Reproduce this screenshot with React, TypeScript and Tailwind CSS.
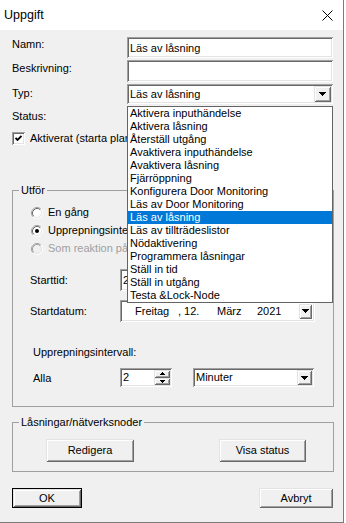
import React from 'react';

const sunken =
  'bg-white shadow-[inset_1px_1px_#a0a0a0,inset_-1px_-1px_#ffffff,inset_2px_2px_#696969,inset_-2px_-2px_#e3e3e3]';
const raised =
  'bg-[#f0f0f0] shadow-[inset_1px_1px_#e3e3e3,inset_-1px_-1px_#696969,inset_2px_2px_#ffffff,inset_-2px_-2px_#a0a0a0]';

const typeOptions = [
  'Aktivera inputhändelse',
  'Aktivera låsning',
  'Återställ utgång',
  'Avaktivera inputhändelse',
  'Avaktivera låsning',
  'Fjärröppning',
  'Konfigurera Door Monitoring',
  'Läs av Door Monitoring',
  'Läs av låsning',
  'Läs av tillträdeslistor',
  'Nödaktivering',
  'Programmera låsningar',
  'Ställ in tid',
  'Ställ in utgång',
  'Testa &Lock-Node',
];

const Arrow = () => (
  <svg width="7" height="4" viewBox="0 0 7 4" className="block">
    <path d="M0 0h7v1H0zM1 1h5v1H1zM2 2h3v1H2zM3 3h1v1H3z" fill="#000" />
  </svg>
);

const SmallArrow = ({ up }: { up?: boolean }) => (
  <svg width="5" height="3" viewBox="0 0 5 3" className="block">
    {up ? (
      <path d="M2 0h1v1H2zM1 1h3v1H1zM0 2h5v1H0z" fill="#000" />
    ) : (
      <path d="M0 0h5v1H0zM1 1h3v1H1zM2 2h1v1H2z" fill="#000" />
    )}
  </svg>
);

const DropButton = ({ className }: { className: string }) => (
  <div className={`${raised} ${className} flex items-center justify-center`}>
    <Arrow />
  </div>
);

const Radio = ({ checked, disabled }: { checked?: boolean; disabled?: boolean }) => (
  <svg width="12" height="12" viewBox="0 0 12 12" className="block shrink-0">
    <circle cx="6" cy="6" r="5" fill={disabled ? '#f0f0f0' : '#ffffff'} />
    <path d="M2.11 9.89A5.5 5.5 0 0 1 9.89 2.11" fill="none" stroke="#a0a0a0" />
    <path d="M9.89 2.11A5.5 5.5 0 0 1 2.11 9.89" fill="none" stroke="#ffffff" />
    <path d="M2.82 9.18A4.5 4.5 0 0 1 9.18 2.82" fill="none" stroke={disabled ? '#a0a0a0' : '#696969'} />
    <path d="M9.18 2.82A4.5 4.5 0 0 1 2.82 9.18" fill="none" stroke="#e3e3e3" />
    {checked && <circle cx="6" cy="6" r="2" fill="#000" />}
  </svg>
);

const Button = ({ label, className, isDefault }: { label: string; className: string; isDefault?: boolean }) => (
  <div className={`${className} ${isDefault ? 'border border-black' : ''}`}>
    <div className={`${raised} w-full h-full flex items-center justify-center`}>{label}</div>
  </div>
);

export default function App() {
  return (
    <div className="w-[346px] h-[523px] bg-white font-['Liberation_Sans',Arial,sans-serif] text-[11px] leading-[13px] text-black">
      <div className="relative w-[344px] h-[523px] bg-[#f0f0f0] border-r border-b border-[#7a7a7a] flex flex-col">
        {/* Title bar */}
        <div className="h-[30px] bg-white flex items-center justify-between pl-[4px] pr-[10px] shrink-0">
          <span className="text-[12.5px]">Uppgift</span>
          <svg width="11" height="11" viewBox="0 0 11 11" className="block">
            <path d="M0.5 0.5L10.5 10.5M10.5 0.5L0.5 10.5" stroke="#000" strokeWidth="1" />
          </svg>
        </div>

        <div className="flex flex-col pl-[12px] pr-[10px] pt-[7px]">
          {/* Name / description / type */}
          <div className="flex h-[21px]">
            <div className="w-[115px] pt-[1px]">Namn:</div>
            <div className={`${sunken} w-[206px] flex items-center pl-[3px] pt-[1px]`}>Läs av låsning</div>
          </div>
          <div className="flex h-[22px] mt-[2px]">
            <div className="w-[115px] pt-[2px]">Beskrivning:</div>
            <div className={`${sunken} w-[206px]`} />
          </div>
          <div className="flex h-[20px] mt-[2px]">
            <div className="w-[115px] pt-[3px]">Typ:</div>
            <div className={`${sunken} w-[206px] flex items-stretch`}>
              <div className="flex-1 flex items-center pl-[3px]">Läs av låsning</div>
              <DropButton className="w-[17px] m-[2px]" />
            </div>
          </div>

          <div className="mt-[6px]">Status:</div>

          <div className="flex items-center h-[13px] mt-[9px] gap-[5px] whitespace-nowrap">
            <div className={`${sunken} w-[13px] h-[13px] flex items-center justify-center shrink-0`}>
              <svg width="7" height="7" viewBox="0 0 7 7" className="block">
                <polyline points="0.5,3 2.5,5 6.5,1" fill="none" stroke="#000" strokeWidth="1.8" />
              </svg>
            </div>
            {/* the rest of this label is hidden behind the open list */}
            <span className="w-[97px] overflow-hidden">Aktiverat (starta planerade uppgifter)</span>
          </div>

          {/* Utför */}
          <fieldset className="mt-[39px] w-[322px] border border-[#a0a0a0] p-0 pb-[19px]">
            <legend className="ml-[6px] px-[2px] leading-[13px]">Utför</legend>
            <div className="ml-[18px] mt-[9px] flex flex-col gap-[5px]">
              <div className="flex items-center h-[13px] gap-[5px] whitespace-nowrap">
                <Radio />
                <span>En gång</span>
              </div>
              <div className="flex items-center h-[13px] gap-[5px] whitespace-nowrap">
                <Radio checked />
                <span className="w-[79px] overflow-hidden">Upprepningsintervall</span>
              </div>
              <div className="flex items-center h-[13px] gap-[5px] whitespace-nowrap text-[#a0a0a0]">
                <Radio disabled />
                <span className="w-[79px] overflow-hidden">Som reaktion på händelse</span>
              </div>
            </div>

            <div className="ml-[17px] mt-[14px] flex items-center h-[22px]">
              <div className="w-[90px]">Starttid:</div>
              <div className={`${sunken} w-[100px] h-full flex items-center pl-[3px]`}>
                <span className="w-[4px] overflow-hidden whitespace-nowrap">20:00</span>
              </div>
            </div>
            <div className="ml-[17px] mt-[9px] flex items-center h-[22px]">
              <div className="w-[90px] pt-[1px]">Startdatum:</div>
              <div className={`${sunken} w-[195px] h-full flex items-center pl-[15px] whitespace-nowrap`}>
                <span className="w-[43px]">Freitag</span>
                <span className="w-[39px]">, 12.</span>
                <span className="w-[40px]">März</span>
                <span className="flex-1">2021</span>
                <DropButton className="w-[13px] h-[15px] mr-[3px]" />
              </div>
            </div>

            <div className="ml-[20px] mt-[24px]">Upprepningsintervall:</div>
            <div className="ml-[20px] mt-[9px] flex h-[19px]">
              <div className="w-[87px] pt-[4px]">Alla</div>
              <div className={`${sunken} w-[52px] flex items-stretch`}>
                <div className="flex-1 flex items-center pl-[3px]">2</div>
                <div className="w-[16px] m-[2px] flex flex-col">
                  <div className={`${raised} flex-1 flex items-center justify-center`}>
                    <SmallArrow up />
                  </div>
                  <div className={`${raised} flex-1 flex items-center justify-center`}>
                    <SmallArrow />
                  </div>
                </div>
              </div>
              <div className={`${sunken} ml-[21px] w-[121px] flex items-stretch`}>
                <div className="flex-1 flex items-center pl-[3px]">Minuter</div>
                <DropButton className="w-[15px] m-[2px]" />
              </div>
            </div>
          </fieldset>

          {/* Låsningar/nätverksnoder */}
          <fieldset className="mt-[9px] w-[322px] border border-[#a0a0a0] p-0 pb-[9px]">
            <legend className="ml-[6px] px-[2px] leading-[13px]">Låsningar/nätverksnoder</legend>
            <div className="mt-[10px] flex">
              <Button label="Redigera" className="ml-[33px] w-[88px] h-[23px]" />
              <Button label="Visa status" className="ml-[85px] w-[87px] h-[23px]" />
            </div>
          </fieldset>

          <div className="mt-[16px] flex">
            <Button label="OK" className="w-[70px] h-[20px]" isDefault />
            <Button label="Avbryt" className="ml-auto w-[74px] h-[20px]" />
          </div>
        </div>

        {/* Open dropdown list of the Typ combo */}
        <div className="absolute left-[127px] top-[106px] w-[206px] h-[197px] bg-white border border-[#646464] z-10">
          {typeOptions.map((opt) => (
            <div
              key={opt}
              className={`h-[13px] pl-[2px] whitespace-nowrap ${
                opt === 'Läs av låsning' ? 'bg-[#0078d7] text-white' : ''
              }`}
            >
              {opt}
            </div>
          ))}
        </div>
      </div>
    </div>
  );
}
